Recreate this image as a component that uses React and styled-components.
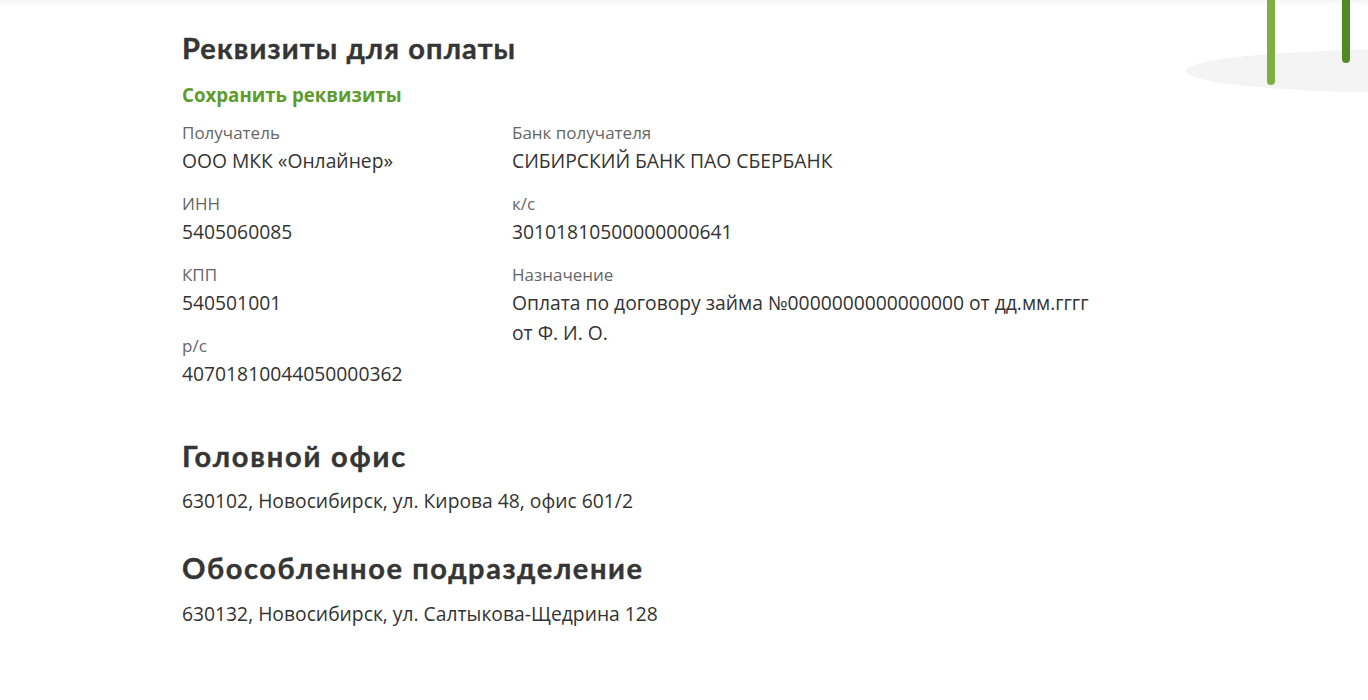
import React from "react";
import styled, { createGlobalStyle } from "styled-components";

const Global = createGlobalStyle`
  html, body { margin: 0; padding: 0; background: #fff; }
  body { font-family: "Open Sans", "Noto Sans", sans-serif; color: #333; }
`;

const Page = styled.div`
  position: relative;
  min-height: 700px;
  overflow: hidden;
  &::before {
    content: "";
    position: absolute;
    left: 0; right: 0; top: 0;
    height: 6px;
    background: linear-gradient(to bottom, rgba(0,0,0,0.04), rgba(0,0,0,0));
  }
`;

const Decor = styled.svg`
  position: absolute;
  right: 0;
  top: 0;
`;

const Content = styled.main`
  padding: 26px 0 0 182px;
  width: 920px;
`;

const Title = styled.h2`
  margin: 0;
  font-family: "Lato", "Noto Sans", sans-serif;
  font-weight: 700;
  font-size: 29px;
  line-height: 44px;
  color: #353535;
  letter-spacing: ${p => p.$ls || 1.2}px;
  -webkit-text-stroke: 0.4px #353535;
`;

const SaveLink = styled.a`
  display: inline-block;
  margin-top: 12px;
  font-weight: 700;
  font-size: 18.7px;
  line-height: 26px;
  color: #5e9c2c;
  text-decoration: none;
  cursor: pointer;
`;

const Grid = styled.div`
  display: grid;
  grid-template-columns: 330px 1fr;
  margin-top: 12px;
`;

const Column = styled.div`
  display: flex;
  flex-direction: column;
  gap: 15px;
`;

const Field = styled.div`
  display: flex;
  flex-direction: column;
`;

const Label = styled.span`
  font-size: 17px;
  line-height: 26px;
  color: #666;
`;

const Value = styled.span`
  font-size: 19.3px;
  line-height: 30px;
  color: #333;
  max-width: ${p => p.$wide ? "590px" : "none"};
`;

const Section = styled.section`
  margin-top: ${p => p.$gap}px;
`;

const Address = styled.p`
  margin: ${p => p.$gap}px 0 0;
  font-size: 19.3px;
  line-height: 30px;
  color: #333;
`;

const left = [
  ["Получатель", "ООО МКК «Онлайнер»"],
  ["ИНН", "5405060085"],
  ["КПП", "540501001"],
  ["р/с", "40701810044050000362"],
];
const right = [
  ["Банк получателя", "СИБИРСКИЙ БАНК ПАО СБЕРБАНК"],
  ["к/с", "30101810500000000641"],
  ["Назначение", "Оплата по договору займа №0000000000000000 от дд.мм.гггг от Ф. И. О."],
];

export default function App() {
  return (
    <Page>
      <Global />
      <Decor width="190" height="100" viewBox="0 0 190 100">
        <ellipse cx="236" cy="71" rx="228" ry="22" fill="#f4f4f4" />
        <rect x="89" y="-10" width="8" height="95" rx="4" fill="#7db03f" />
        <rect x="164" y="-10" width="8" height="73" rx="4" fill="#4f8a25" />
      </Decor>
      <Content>
        <Title $ls={1.1}>Реквизиты для оплаты</Title>
        <SaveLink>Сохранить реквизиты</SaveLink>
        <Grid>
          <Column>
            {left.map(([l, v]) => (
              <Field key={l}><Label>{l}</Label><Value>{v}</Value></Field>
            ))}
          </Column>
          <Column>
            {right.map(([l, v]) => (
              <Field key={l}><Label>{l}</Label><Value $wide>{v}</Value></Field>
            ))}
          </Column>
        </Grid>
        <Section $gap={45}>
          <Title $ls={1.8}>Головной офис</Title>
          <Address $gap={8}>630102, Новосибирск, ул. Кирова 48, офис 601/2</Address>
        </Section>
        <Section $gap={30}>
          <Title $ls={1.6}>Обособленное подразделение</Title>
          <Address $gap={9}>630132, Новосибирск, ул. Салтыкова-Щедрина 128</Address>
        </Section>
      </Content>
    </Page>
  );
}
